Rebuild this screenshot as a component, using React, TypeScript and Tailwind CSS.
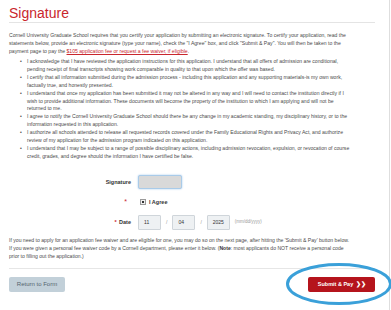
import React from 'react';

const bullets: string[][] = [
  [
    'I acknowledge that I have reviewed the application instructions for this application. I understand that all offers of admission are conditional,',
    'pending receipt of final transcripts showing work comparable in quality to that upon which the offer was based.',
  ],
  [
    'I certify that all information submitted during the admission process - including this application and any supporting materials-is my own work,',
    'factually true, and honestly presented.',
  ],
  [
    'I understand that once my application has been submitted it may not be altered in any way and I will need to contact the institution directly if I',
    'wish to provide additional information. These documents will become the property of the institution to which I am applying and will not be',
    'returned to me.',
  ],
  [
    'I agree to notify the Cornell University Graduate School should there be any change in my academic standing, my disciplinary history, or to the',
    'information requested in this application.',
  ],
  [
    'I authorize all schools attended to release all requested records covered under the Family Educational Rights and Privacy Act, and authorize',
    'review of my application for the admission program indicated on this application.',
  ],
  [
    'I understand that I may be subject to a range of possible disciplinary actions, including admission revocation, expulsion, or revocation of course',
    'credit, grades, and degree should the information I have certified be false.',
  ],
];

const App: React.FC = () => {
  return (
    <div className="relative h-[310px] w-[391px] overflow-hidden bg-white font-['Liberation_Sans',Arial,sans-serif] text-[#4a4a4a]">
      <div className="h-full w-[390px] border-r border-[#dedede] pl-[9px] pr-[14px] pt-[6px]">
        <h1 className="border-b border-[#e4e4e4] pb-[1px] text-[14px] leading-[15px] text-[#c9262d]">Signature</h1>

        <div className="mt-[8px] whitespace-nowrap text-[5.1px] leading-[8px]">
          <div>
            Cornell University Graduate School requires that you certify your application by submitting an electronic signature. To certify your application, read the
          </div>
          <div>
            statements below, provide an electronic signature (type your name), check the "I Agree" box, and click "Submit &amp; Pay". You will then be taken to the
          </div>
          <div>
            payment page to pay the{' '}
            <span className="text-[#c9262d] underline">$105 application fee or request a fee waiver, if eligible</span>.
          </div>
        </div>

        <ul className="ml-[11px] mt-[3px] whitespace-nowrap text-[5.1px] leading-[7.9px]">
          {bullets.map((lines, i) => (
            <li key={i} className="flex">
              <span className="w-[7px] shrink-0">•</span>
              <div>
                {lines.map((l, j) => (
                  <div key={j}>{l}</div>
                ))}
              </div>
            </li>
          ))}
        </ul>

        <div className="mt-[14px] flex flex-col gap-[7px] text-[5.5px]">
          <div className="flex items-center gap-[7px]">
            <span className="w-[122px] text-right font-bold text-[#333]">Signature</span>
            <div className="h-[14px] w-[44px] rounded-[2px] border border-[#a9cbe9] bg-[#d9d9d9] shadow-[0_0_2px_#9cc4ea]" />
          </div>
          <div className="flex h-[12px] items-center gap-[7px]">
            <span className="w-[122px] pr-[4px] text-right text-[7px] text-[#c9262d]">*</span>
            <div className="ml-[2px] flex h-[6px] w-[6px] items-center justify-center border border-[#9a9a9a] bg-[#eeeeee]">
              <div className="h-[2px] w-[2px] bg-[#333]" />
            </div>
            <span className="-ml-[4px] font-bold text-[#333]">I Agree</span>
          </div>
          <div className="flex items-center gap-[7px]">
            <span className="w-[122px] text-right font-bold text-[#333]">
              <span className="mr-[1px] text-[#c9262d]">*</span> Date
            </span>
            <div className="flex items-center gap-[5px] text-[5px]">
              <div className="flex h-[15px] w-[23px] items-center rounded-[1px] border border-[#cfd5da] bg-[#eef1f3] pl-[5px] text-[#333]">11</div>
              <span className="text-[#999]">/</span>
              <div className="flex h-[15px] w-[23px] items-center rounded-[1px] border border-[#cfd5da] bg-[#eef1f3] pl-[5px] text-[#333]">04</div>
              <span className="text-[#999]">/</span>
              <div className="flex h-[15px] w-[23px] items-center rounded-[1px] border border-[#cfd5da] bg-[#eef1f3] pl-[5px] text-[#333]">2025</div>
              <span className="text-[4.5px] text-[#999]">(mm/dd/yyyy)</span>
            </div>
          </div>
        </div>

        <div className="mt-[6px] whitespace-nowrap text-[5.1px] leading-[8px]">
          <div>
            If you need to apply for an application fee waiver and are eligible for one, you may do so on the next page, after hitting the 'Submit &amp; Pay' button below.
          </div>
          <div>
            If you were given a personal fee waiver code by a Cornell department, please enter it below. (<b className="text-[#333]">Note</b>: most applicants do NOT receive a personal code
          </div>
          <div>prior to filling out the application.)</div>
        </div>

        <div className="mt-[8px] border-t border-[#e6e6e6]" />

        <div className="mt-[8px] flex items-center justify-between">
          <button className="h-[15px] w-[56px] rounded-[2px] bg-[#c2d0d9] text-[6px] text-[#55646f]">Return to Form</button>
          <button className="flex h-[15px] w-[67px] items-center justify-center gap-[3px] rounded-[2px] bg-[#b5141c] text-[5.5px] font-bold text-white">
            Submit &amp; Pay
            <span className="text-[6px] tracking-[-0.5px]">❯❯</span>
          </button>
        </div>
      </div>

      <svg className="pointer-events-none absolute left-[285px] top-[262px]" width="108" height="44" viewBox="0 0 108 44">
        <ellipse cx="54" cy="22" rx="51.5" ry="19.5" fill="none" stroke="#3aa0d9" strokeWidth="3" />
      </svg>
    </div>
  );
};

export default App;
